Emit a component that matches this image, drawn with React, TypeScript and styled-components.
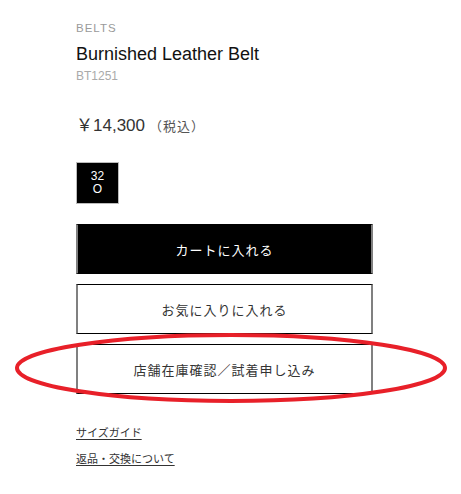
import styled, { createGlobalStyle } from "styled-components";

const GlobalStyle = createGlobalStyle`
  html, body {
    margin: 0;
    padding: 0;
    background: #fff;
  }
  body {
    font-family: "Liberation Sans", Arial, "Noto Sans CJK JP", sans-serif;
    color: #000;
  }
`;

const Page = styled.div`
  position: relative;
  width: 461px;
  height: 494px;
  overflow: hidden;
`;

const Detail = styled.div`
  display: flex;
  flex-direction: column;
  width: 297px;
  margin-left: 76px;
  padding-top: 21px;
`;

const Category = styled.div`
  font-size: 11.5px;
  letter-spacing: 1px;
  color: #9a9a9a;
  line-height: 14px;
`;

const Title = styled.h1`
  margin: 8px 0 0;
  font-size: 18px;
  font-weight: 400;
  line-height: 22px;
  color: #111;
`;

const Code = styled.div`
  margin-top: 4px;
  font-size: 12px;
  color: #aaa;
  line-height: 14px;
`;

const Price = styled.div`
  margin-top: 32px;
  font-size: 17px;
  color: #333;
  line-height: 22px;
`;

const Tax = styled.span`
  margin-left: 4px;
  font-size: 13px;
  letter-spacing: 1px;
  color: #555;
  font-family: "Noto Sans CJK JP", sans-serif;
`;

const Swatch = styled.button`
  margin-top: 25px;
  width: 43px;
  height: 42px;
  background: #000;
  border: 1px solid #bbb;
  color: #fff;
  font-family: "Liberation Sans", Arial, sans-serif;
  font-size: 12px;
  line-height: 13px;
  padding: 0;
  display: flex;
  flex-direction: column;
  align-items: center;
  justify-content: center;
`;

const Buttons = styled.div`
  margin-top: 20px;
  display: flex;
  flex-direction: column;
  gap: 10px;
`;

const ActionButton = styled.button<{ $primary?: boolean }>`
  height: 50px;
  width: 297px;
  box-sizing: border-box;
  background: ${(p) => (p.$primary ? "#000" : "#fff")};
  color: ${(p) => (p.$primary ? "#fff" : "#333")};
  border-style: solid;
  border-width: 1px 2px;
  border-color: #000 #808080;
  font-family: "Noto Sans CJK JP", sans-serif;
  font-size: 13px;
  letter-spacing: 1px;
  cursor: pointer;
`;

const Links = styled.div`
  margin-top: 31px;
  display: flex;
  flex-direction: column;
  gap: 12px;
`;

const TextLink = styled.a`
  font-family: "Noto Sans CJK JP", sans-serif;
  font-size: 11px;
  color: #333;
  text-decoration: underline;
  text-underline-offset: 2px;
  line-height: 14px;
  align-self: flex-start;
`;

const Annotation = styled.svg`
  position: absolute;
  left: 0;
  top: 0;
  pointer-events: none;
`;

export default function App() {
  return (
    <Page>
      <GlobalStyle />
      <Detail>
        <Category>BELTS</Category>
        <Title>Burnished Leather Belt</Title>
        <Code>BT1251</Code>
        <Price>
          ￥14,300<Tax>（税込）</Tax>
        </Price>
        <Swatch>
          <span>32</span>
          <span>O</span>
        </Swatch>
        <Buttons>
          <ActionButton $primary>カートに入れる</ActionButton>
          <ActionButton>お気に入りに入れる</ActionButton>
          <ActionButton>店舗在庫確認／試着申し込み</ActionButton>
        </Buttons>
        <Links>
          <TextLink href="#">サイズガイド</TextLink>
          <TextLink href="#">返品・交換について</TextLink>
        </Links>
      </Detail>
      {/* red marker drawn over the screenshot */}
      <Annotation width="461" height="494">
        <ellipse
          cx="231"
          cy="368"
          rx="214"
          ry="33"
          fill="none"
          stroke="#e82029"
          strokeWidth="4"
        />
      </Annotation>
    </Page>
  );
}
